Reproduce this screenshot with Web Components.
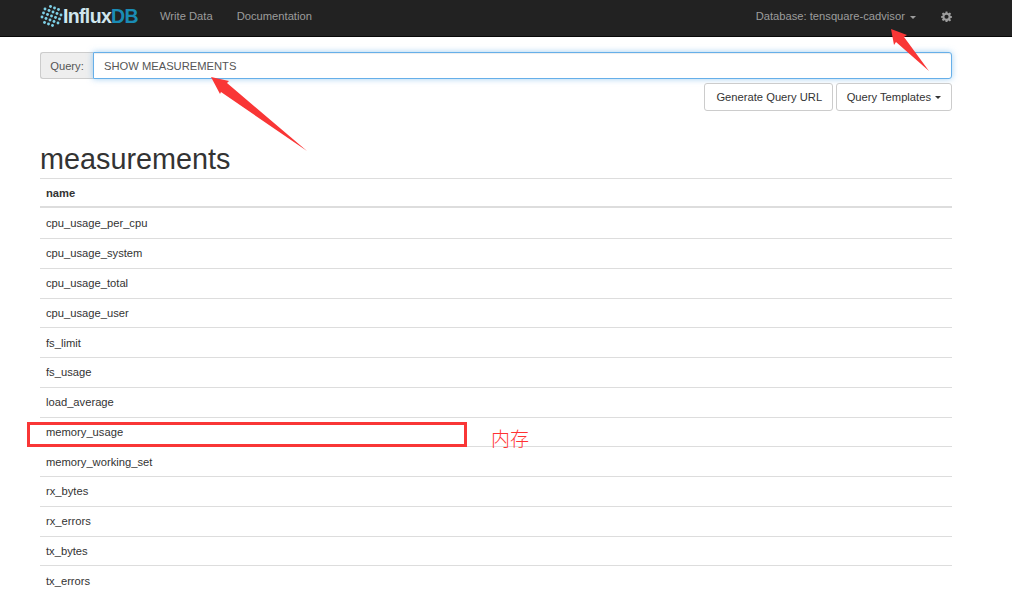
<!DOCTYPE html>
<html>
<head>
<meta charset="utf-8">
<title>InfluxDB</title>
<style>
  html, body { margin: 0; padding: 0; background: #fff; }
  body { font: 11.2px/16px "Liberation Sans", Arial, sans-serif; color: #333; height: 610px; overflow: hidden; position: relative; }
</style>
</head>
<body>
<influx-navbar></influx-navbar>
<influx-page>
  <query-bar value="SHOW MEASUREMENTS"></query-bar>
  <query-actions></query-actions>
  <series-table title="measurements" column="name" rows="cpu_usage_per_cpu,cpu_usage_system,cpu_usage_total,cpu_usage_user,fs_limit,fs_usage,load_average,memory_usage,memory_working_set,rx_bytes,rx_errors,tx_bytes,tx_errors"></series-table>
</influx-page>
<shot-annotations></shot-annotations>

<script>
// lattice of dots for the logo, a grid turned by about 20 degrees
function logoDots() {
  let out = '';
  for (let i = -2; i <= 2; i++) {
    for (let j = -2; j <= 2; j++) {
      if (Math.abs(i) + Math.abs(j) === 4) continue;
      const x = 11.5 + i * 4 - j * 1.5;
      const y = 11 + i * 1.5 + j * 4;
      out += `<circle cx="${x}" cy="${y}" r="1.45"/>`;
    }
  }
  return out;
}

class InfluxNavbar extends HTMLElement {
  constructor() {
    super();
    this.attachShadow({ mode: 'open' }).innerHTML = `
      <style>
        :host { display: flex; align-items: center; box-sizing: content-box; height: 32px; background: #222; border-bottom: 1px solid #080808; padding: 0 60px 4px 40px; color: #9d9d9d; font-size: 11.2px; }
        .brand { display: flex; align-items: center; width: 120px; font: bold 19.5px/20px "Liberation Sans", sans-serif; letter-spacing: -0.65px; color: #cfe6ee; }
        .brand svg { width: 23px; height: 22px; }
        .brand b { color: #1a8cb5; font-weight: bold; }
        .link { margin-right: 24px; }
        .spacer { flex: 1; }
        .caret { display: inline-block; border-top: 3.2px solid #9d9d9d; border-left: 3.2px solid transparent; border-right: 3.2px solid transparent; margin-left: 2px; vertical-align: middle; }
        .gear { width: 11px; height: 11px; margin-left: 25px; fill: #9d9d9d; }
      </style>
      <div class="brand">
        <svg viewBox="0 0 23 22" fill="#7ed0e6">${logoDots()}</svg>
        <span>Influx<b>DB</b></span>
      </div>
      <span class="link">Write Data</span>
      <span class="link">Documentation</span>
      <span class="spacer"></span>
      <span>Database: tensquare-cadvisor <i class="caret"></i></span>
      <svg class="gear" viewBox="0 0 24 24"><path fill-rule="evenodd" d="M10 1h4l.6 3.2 2 .8L19.300 3.200l2.800 2.800L20.100 8.700l.8 2L24 11.300v3.400l-3.100.6-.8 2 1.900 2.700-2.800 2.800-2.700-1.900-2 .8L14 24h-4l-.6-3.100-2-.8-2.700 1.900-2.800-2.800 1.900-2.700-.8-2L0 14.700v-3.400l3-.6.800-2L1.900 6l2.800-2.800L7.400 5l2-.8zM12 8a4.500 4.500 0 1 0 0 9 4.500 4.500 0 0 0 0-9z"/></svg>
    `;
  }
}

class InfluxPage extends HTMLElement {
  constructor() {
    super();
    this.attachShadow({ mode: 'open' }).innerHTML = `
      <style>
        :host { display: block; padding: 15px 60px 0 40px; }
      </style>
      <slot></slot>
    `;
  }
}

class QueryBar extends HTMLElement {
  constructor() {
    super();
    this.attachShadow({ mode: 'open' }).innerHTML = `
      <style>
        :host { display: flex; height: 27px; }
        .label { display: flex; align-items: center; justify-content: center; box-sizing: border-box; width: 53px; background: #eee; border: 1px solid #ccc; border-right: 0; border-radius: 3px 0 0 3px; color: #555; }
        .input { flex: 1; display: flex; align-items: center; box-sizing: border-box; padding: 0 10px; background: #fff; border: 1px solid #66afe9; border-radius: 0 3px 3px 0; color: #555; box-shadow: inset 0 1px 1px rgba(0,0,0,.075), 0 0 6px rgba(102,175,233,.6); }
      </style>
      <div class="label">Query:</div>
      <div class="input"></div>
    `;
    this.shadowRoot.querySelector('.input').textContent = this.getAttribute('value');
  }
}

class QueryActions extends HTMLElement {
  constructor() {
    super();
    this.attachShadow({ mode: 'open' }).innerHTML = `
      <style>
        :host { display: flex; justify-content: flex-end; gap: 3px; margin-top: 4px; }
        .btn { display: flex; align-items: center; box-sizing: border-box; height: 28px; padding: 0 10px; background: #fff; border: 1px solid #ccc; border-radius: 3px; color: #333; }
        .first { padding: 0 9.5px 0 11px; }
        .caret { display: inline-block; border-top: 3.2px solid #333; border-left: 3.2px solid transparent; border-right: 3.2px solid transparent; margin-left: 4px; }
      </style>
      <div class="btn first">Generate Query URL</div>
      <div class="btn">Query Templates <i class="caret"></i></div>
    `;
  }
}

class SeriesTable extends HTMLElement {
  constructor() {
    super();
    this.attachShadow({ mode: 'open' }).innerHTML = `
      <style>
        :host { display: block; margin-top: 30px; }
        h1 { margin: 0; font: 500 28.8px/36px "Liberation Sans", sans-serif; color: #333; height: 37px; }
        .row { display: flex; align-items: center; box-sizing: border-box; height: 29.75px; padding-left: 6px; border-top: 1px solid #ddd; }
        .head { font-weight: bold; height: 30.25px; border-bottom: 2px solid #ddd; }
        .body .row:first-child { border-top: 0; }
      </style>
      <h1></h1>
      <div class="row head"></div>
      <div class="body"></div>
    `;
    const root = this.shadowRoot;
    root.querySelector('h1').textContent = this.getAttribute('title');
    root.querySelector('.head').textContent = this.getAttribute('column');
    for (const name of this.getAttribute('rows').split(',')) {
      const row = document.createElement('div');
      row.className = 'row';
      row.textContent = name;
      root.querySelector('.body').appendChild(row);
    }
  }
}

// red marks someone drew over the screenshot
class ShotAnnotations extends HTMLElement {
  constructor() {
    super();
    this.attachShadow({ mode: 'open' }).innerHTML = `
      <style>
        :host { position: absolute; inset: 0; pointer-events: none; display: block; }
        svg { position: absolute; left: 0; top: 0; }
        .box { position: absolute; left: 27px; top: 422px; width: 440px; height: 25px; box-sizing: border-box; border: 3px solid #f93636; }
        .note { position: absolute; left: 491px; top: 427px; font: 300 19px/22px "Noto Sans CJK SC", sans-serif; color: #ff3333; }
      </style>
      <svg width="1012" height="610" fill="#f93636">
        <polygon points="211,77 229,81 227,83 307,151 221,92 220,94"/>
        <polygon points="891,29 907,35 904,37 929,71 896,42 894,45"/>
      </svg>
      <div class="box"></div>
      <div class="note">内存</div>
    `;
  }
}

customElements.define('influx-navbar', InfluxNavbar);
customElements.define('influx-page', InfluxPage);
customElements.define('query-bar', QueryBar);
customElements.define('query-actions', QueryActions);
customElements.define('series-table', SeriesTable);
customElements.define('shot-annotations', ShotAnnotations);
</script>
</body>
</html>
